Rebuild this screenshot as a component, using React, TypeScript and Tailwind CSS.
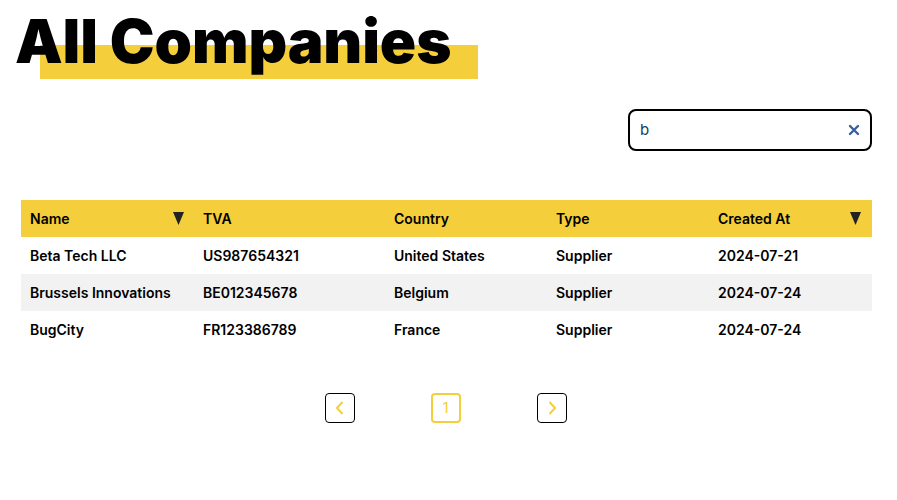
import React from "react";

const rows = [
  ["Beta Tech LLC", "US987654321", "United States", "Supplier", "2024-07-21"],
  ["Brussels Innovations", "BE012345678", "Belgium", "Supplier", "2024-07-24"],
  ["BugCity", "FR123386789", "France", "Supplier", "2024-07-24"],
];

const Tri = () => (
  <svg width="11" height="13" viewBox="0 0 11 13"><path d="M0 0 H11 L5.5 13 Z" fill="#222" /></svg>
);

export default function App() {
  return (
    <div className="w-[897px] h-[500px] bg-white text-black" style={{ fontFamily: "Inter, 'Noto Sans', sans-serif" }}>
      <div className="relative pl-[15px] pt-[6px] h-[80px]">
        <div className="absolute left-[40px] top-[45px] w-[438px] h-[34px] bg-[#f4cf3b]" />
        <h1 className="relative text-[60px] leading-[70px] font-black tracking-[-0.1px]">All Companies</h1>
      </div>
      <div className="flex justify-end pr-[25px] mt-[29px]">
        <div className="w-[244px] h-[42px] border-2 border-black rounded-[8px] flex items-center px-[10px] justify-between">
          <span className="text-[15px] text-[#1a3a5a]">b</span>
          <svg width="12" height="12" viewBox="0 0 12 12"><path d="M2 2 L10 10 M10 2 L2 10" stroke="#3a5f9a" strokeWidth="2.4" strokeLinecap="round" /></svg>
        </div>
      </div>
      <div className="mx-[21px] mt-[49px] w-[851px] text-[14px] font-semibold">
        <div className="flex h-[37px] items-center bg-[#f4cf3b]">
          <div className="w-[173px] pl-[9px] pr-[10px] flex justify-between items-center"><span>Name</span><Tri /></div>
          <div className="w-[191px] pl-[9px]">TVA</div>
          <div className="w-[162px] pl-[9px]">Country</div>
          <div className="w-[162px] pl-[9px]">Type</div>
          <div className="flex-1 pl-[9px] pr-[11px] flex justify-between items-center"><span>Created At</span><Tri /></div>
        </div>
        {rows.map((r, i) => (
          <div key={i} className={`flex h-[37px] items-center ${i === 1 ? "bg-[#f2f2f2]" : "bg-white"}`}>
            <div className="w-[173px] pl-[9px]">{r[0]}</div>
            <div className="w-[191px] pl-[9px]">{r[1]}</div>
            <div className="w-[162px] pl-[9px]">{r[2]}</div>
            <div className="w-[162px] pl-[9px]">{r[3]}</div>
            <div className="flex-1 pl-[9px]">{r[4]}</div>
          </div>
        ))}
      </div>
      <div className="ml-[20px] w-[851px] mt-[45px] flex justify-center gap-[76px]">
        <div className="w-[30px] h-[30px] border border-black rounded-[4px] flex items-center justify-center">
          <svg width="14" height="16" viewBox="0 0 14 16"><path d="M9.5 2 L4 8 L9.5 14" fill="none" stroke="#f4cf3b" strokeWidth="2" /></svg>
        </div>
        <div className="w-[30px] h-[30px] border-2 border-[#f4cf3b] rounded-[4px] flex items-center justify-center text-[#f4cf3b] text-[15px] font-normal">1</div>
        <div className="w-[30px] h-[30px] border border-black rounded-[4px] flex items-center justify-center">
          <svg width="14" height="16" viewBox="0 0 14 16"><path d="M4.5 2 L10 8 L4.5 14" fill="none" stroke="#f4cf3b" strokeWidth="2" /></svg>
        </div>
      </div>
    </div>
  );
}
